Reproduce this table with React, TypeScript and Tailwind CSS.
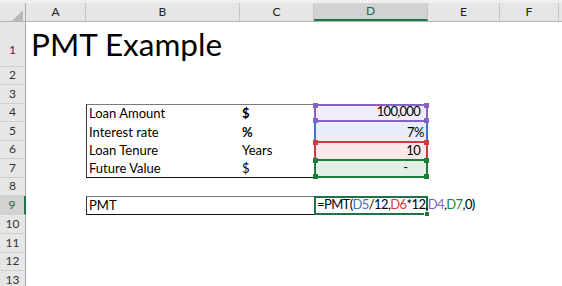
import React from 'react';

const font = "font-['Lato',sans-serif]";

function Cell({ w, className = '', children }: { w: string; className?: string; children?: React.ReactNode }) {
  return (
    <div className={`relative shrink-0 flex items-end px-[2px] leading-[18px] text-[13px] text-black whitespace-nowrap ${w} ${className}`}>
      {children}
    </div>
  );
}

function Dot({ pos, color }: { pos: string; color: string }) {
  return <div className={`absolute w-[5px] h-[5px] ${pos} ${color}`} />;
}

function Row({ n, h, sel, hdrPad = 'pb-[2px]', children }: { n: number; h: string; sel?: boolean; hdrPad?: string; children?: React.ReactNode }) {
  return (
    <div className={`flex ${h}`}>
      <div
        className={`w-[26px] shrink-0 flex items-end justify-center text-[12px] leading-[14px] border-b border-[#d0d0d0] ${hdrPad} ${
          sel ? 'bg-[#d2d2d2] text-[#1e6b45] border-r-2 border-r-[#217346]' : 'bg-[#e6e6e6] text-[#333] border-r border-r-[#a8a8a8]'
        }`}
      >
        {n}
      </div>
      {children}
    </div>
  );
}

export default function App() {
  const cols = [
    { l: 'A', w: 'w-[60px]' },
    { l: 'B', w: 'w-[154px]' },
    { l: 'C', w: 'w-[74px]' },
    { l: 'D', w: 'w-[114px]', sel: true },
    { l: 'E', w: 'w-[72px]' },
    { l: 'F', w: 'w-[59px]' },
  ];

  return (
    <div className={`w-[562px] h-[286px] overflow-hidden bg-white ${font}`}>
      <div className="h-[3px] bg-[#f0f0f0]" />
      {/* column headers */}
      <div className="flex h-[19px] bg-[#e6e6e6] border-b border-[#b4b4b4]">
        <div className="w-[26px] shrink-0 border-r border-[#a8a8a8] relative">
          <svg className="absolute left-[12px] top-[7px]" width="11" height="11" viewBox="0 0 11 11">
            <polygon points="11,0 11,11 0,11" fill="#b8b8b8" />
          </svg>
        </div>
        {cols.map((c) => (
          <div
            key={c.l}
            className={`${c.w} shrink-0 flex items-center justify-center text-[12px] border-r border-[#c4c4c4] ${
              c.sel ? 'bg-[#d2d2d2] text-[#1e6b45] border-b-2 border-b-[#217346]' : 'text-[#222]'
            }`}
          >
            {c.l}
          </div>
        ))}
        <div className="flex-1" />
      </div>

      <Row n={1} h="h-[45px]" hdrPad="pb-[9px]">
        <Cell w="w-[60px]" className="overflow-visible z-10">
          <span className="text-[31.5px] leading-[45px] pl-[3px] text-black">PMT Example</span>
        </Cell>
      </Row>
      <Row n={2} h="h-[18px]" />
      <Row n={3} h="h-[19px]" />
      <Row n={4} h="h-[18px]">
        <Cell w="w-[60px]" />
        <Cell w="w-[154px]" className="border-t border-l border-t-[#7a7a7a] border-l-[#333]">Loan Amount</Cell>
        <Cell w="w-[74px]" className="border-t border-t-[#7a7a7a] font-bold">$</Cell>
        <Cell w="w-[114px]" className="justify-end pr-[6px] tracking-[-0.7px] bg-[#f0ecf8] border-2 border-[#8562c6]">
          100,000
          <Dot pos="-left-[3px] -top-[3px] z-10" color="bg-[#8562c6]" />
          <Dot pos="-right-[3px] -top-[3px] z-10" color="bg-[#8562c6]" />
          <Dot pos="-left-[3px] -bottom-[3px] z-10" color="bg-[#8562c6]" />
          <Dot pos="-right-[3px] -bottom-[3px] z-10" color="bg-[#8562c6]" />
        </Cell>
      </Row>
      <Row n={5} h="h-[19px]">
        <Cell w="w-[60px]" />
        <Cell w="w-[154px]" className="border-l border-l-[#333]">Interest rate</Cell>
        <Cell w="w-[74px]" className="font-bold">%</Cell>
        <Cell w="w-[114px]" className="justify-end pr-[2px] tracking-[-0.5px] bg-[#e8eef9] border-x-2 border-[#3e74cc]">7%</Cell>
      </Row>
      <Row n={6} h="h-[18px]">
        <Cell w="w-[60px]" />
        <Cell w="w-[154px]" className="border-l border-l-[#333]">Loan Tenure</Cell>
        <Cell w="w-[74px]">Years</Cell>
        <Cell w="w-[114px]" className="justify-end pr-[6px] tracking-[-0.7px] bg-[#fbe9e9] border-2 border-b-0 border-[#cc3b3f]">
          10
          <Dot pos="-left-[3px] -top-[3px] z-10" color="bg-[#cc3b3f]" />
          <Dot pos="-right-[3px] -top-[3px] z-10" color="bg-[#cc3b3f]" />
        </Cell>
      </Row>
      <Row n={7} h="h-[19px]">
        <Cell w="w-[60px]" />
        <Cell w="w-[154px]" className="border-l border-b border-l-[#333] border-b-[#111]">Future Value</Cell>
        <Cell w="w-[74px]" className="border-b border-b-[#111]">$</Cell>
        <Cell w="w-[114px]" className="justify-end pr-[18px] bg-[#e4f0e5] border-2 border-[#1b7f3a]">
          -
          <Dot pos="-left-[3px] -top-[3px] z-20" color="bg-[#1b7f3a]" />
          <Dot pos="-right-[3px] -top-[3px] z-20" color="bg-[#1b7f3a]" />
          <Dot pos="-left-[3px] -bottom-[3px] z-20" color="bg-[#1b7f3a]" />
          <Dot pos="-right-[3px] -bottom-[3px] z-20" color="bg-[#1b7f3a]" />
        </Cell>
      </Row>
      <Row n={8} h="h-[18px]" />
      <Row n={9} h="h-[19px]" sel>
        <Cell w="w-[60px]" />
        <Cell w="w-[154px]" className="border-t border-l border-b border-t-[#7a7a7a] border-l-[#333] border-b-[#111]">PMT</Cell>
        <Cell w="w-[74px]" className="border-t border-b border-t-[#7a7a7a] border-b-[#111]" />
        <Cell w="w-[114px]" className="border-2 border-[#217346] overflow-visible z-10 pl-[1px]">
          <span className="tracking-[-0.6px]">
            =PMT(<span className="text-[#3e74cc]">D5</span>/12,<span className="text-[#d6393d]">D6</span>*12,
            <span className="text-[#8562c6]">D4</span>,<span className="text-[#1b8a3a]">D7</span>,0)
          </span>
          <div className="absolute -right-[4px] -bottom-[4px] w-[6px] h-[6px] bg-[#217346] border border-white" />
        </Cell>
      </Row>
      <Row n={10} h="h-[19px]" />
      <Row n={11} h="h-[19px]" />
      <Row n={12} h="h-[18px]" />
      <Row n={13} h="h-[19px]" />
    </div>
  );
}
